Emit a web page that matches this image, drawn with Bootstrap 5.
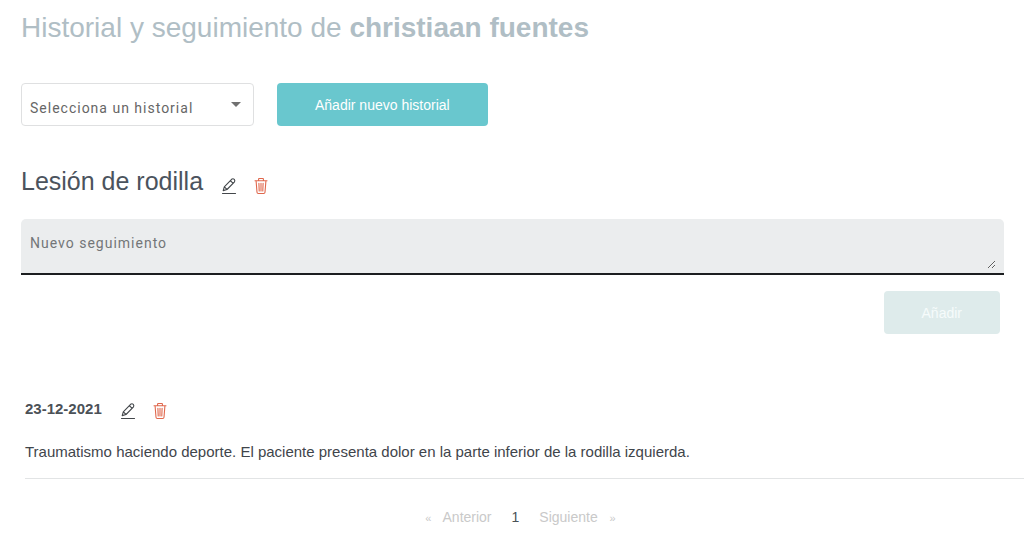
<!DOCTYPE html>
<html lang="es">
<head>
<meta charset="utf-8">
<meta name="viewport" content="width=device-width, initial-scale=1">
<title>Historial y seguimiento</title>
<link href="https://cdn.jsdelivr.net/npm/bootstrap@5.3.0/dist/css/bootstrap.min.css" rel="stylesheet">
<style>
body { font-family: "Liberation Sans", Arial, sans-serif; font-size: 15px; line-height: 20px; color: #3f454b; background: #fff; }
.page { padding: 9px 0 0 21px; }
.page-title { font-size: 28px; line-height: 38px; color: #b0bec5; font-weight: 400; }
.section-title { font-size: 25px; line-height: 36px; color: #4b535d; font-weight: 400; }
.toolbar { gap: 23px; margin-top: 36px; }
.history-select { width: 233px; height: 43px; padding: 8px 32px 0 8px; border: 1px solid #dfe0e1; border-radius: 4px; color: #666; font-family: Roboto, sans-serif; font-size: 14px; letter-spacing: 1px;
  background-image: url("data:image/svg+xml,%3Csvg xmlns='http://www.w3.org/2000/svg' viewBox='0 0 10 5'%3E%3Cpath d='M0 0h10L5 5z' fill='%23707070'/%3E%3C/svg%3E"); background-size: 10px 5px; background-position: right 12px top 18px; }
.btn-action { height: 43px; padding: 0 38px; border: 0; border-radius: 4px; font-size: 14px; line-height: 20px; color: #fff; background: #69c7ce; }
.btn-action:hover { background: #58b8c0; color: #fff; }
.btn-action:disabled { background: #deebeb; color: #f6fbfb; opacity: 1; }
.record { margin-top: 37px; }
.note-field { margin-right: 20px; padding: 14px 8px 4px 9px; background: #ebedee; border-bottom: 2px solid #1c1e20; border-radius: 5px 5px 0 0; }
.note-field textarea { height: 36px; padding: 0; border: 0; resize: vertical; background: transparent; font-family: Roboto, sans-serif; font-size: 14px; line-height: 20px; letter-spacing: 1px; overflow: hidden; }
.note-field textarea:focus { background: transparent; box-shadow: none; }
.note-field textarea::placeholder { color: #737678; }
.icon-btn { padding: 0; border: 0; line-height: 0; color: #43474b; }
.icon-btn.remove { color: #e0674c; }
.icon-btn svg { width: 16px; height: 18px; }
.actions { gap: 16px; margin-left: 18px; }
.entry { margin-left: 4px; border-bottom: 1px solid #e2e4e5; }
.entry-date { font-size: 15px; line-height: 20px; font-weight: 700; color: #4b5157; }
.entry-text { margin: 22px 0 0; }
.pager { gap: 21px; padding: 4px 4px 0 0; font-size: 14px; }
.pager .page-link { padding: 0; border: 0; background: transparent; color: #4b5157; font-size: 14px; line-height: 20px; }
.pager .disabled .page-link { color: #c9c9c9; background: transparent; }
.pager .arrow { font-size: 11px; }
</style>
</head>
<body>
<svg class="d-none" aria-hidden="true">
  <symbol id="pencil" viewBox="0 0 16 18"><g fill="none" stroke="currentColor" stroke-width="1.1" stroke-linejoin="round" stroke-linecap="round"><path d="M2.2 13.6 3.3 9.8 10.6 2.3Q12 1.2 13.3 2.4 14.4 3.7 13.3 5.1L6 12.5ZM9.4 3.6l2.7 2.7M3.4 9.9l2.5 2.5"/><path d="M1.5 16.5h13"/></g></symbol>
  <symbol id="trash" viewBox="0 0 16 18"><g fill="none" stroke="currentColor" stroke-width="1.1" stroke-linejoin="round" stroke-linecap="round"><path d="M2 3.7h12M5.6 3.5V2Q5.6 1.5 6.1 1.5h3.8Q10.4 1.5 10.4 2v1.5M3.1 4l.9 11.3Q4.1 16.5 5.3 16.5h5.4Q11.9 16.5 12 15.3L12.9 4M5.9 6.3l.3 7.7M8 6.3V14M10.1 6.3 9.8 14"/></g></symbol>
</svg>
<main class="page">
  <h1 class="page-title mb-0">Historial y seguimiento de <strong>christiaan fuentes</strong></h1>

  <div class="toolbar d-flex align-items-center">
    <select class="form-select history-select" aria-label="Historial">
      <option selected>Selecciona un historial</option>
      <option>Lesión de rodilla</option>
    </select>
    <button type="button" class="btn btn-action">Añadir nuevo historial</button>
  </div>

  <section class="record">
    <div class="d-flex align-items-end">
      <h2 class="section-title mb-0">Lesión de rodilla</h2>
      <div class="actions d-flex pb-1">
        <button type="button" class="btn icon-btn" aria-label="Editar historial"><svg><use href="#pencil"/></svg></button>
        <button type="button" class="btn icon-btn remove" aria-label="Eliminar historial"><svg><use href="#trash"/></svg></button>
      </div>
    </div>
    <form class="mt-3 pt-1">
      <div class="note-field d-flex">
        <textarea class="form-control" placeholder="Nuevo seguimiento" aria-label="Nuevo seguimiento"></textarea>
      </div>
      <div class="d-flex justify-content-end mt-3 me-4">
        <button type="submit" class="btn btn-action" disabled>Añadir</button>
      </div>
    </form>
  </section>

  <section class="mt-5 pt-3">
    <article class="entry pb-3">
      <div class="d-flex align-items-center">
        <h3 class="entry-date mb-0">23-12-2021</h3>
        <div class="actions d-flex pt-1">
          <button type="button" class="btn icon-btn" aria-label="Editar seguimiento"><svg><use href="#pencil"/></svg></button>
          <button type="button" class="btn icon-btn remove" aria-label="Eliminar seguimiento"><svg><use href="#trash"/></svg></button>
        </div>
      </div>
      <p class="entry-text">Traumatismo haciendo deporte. El paciente presenta dolor en la parte inferior de la rodilla izquierda.</p>
    </article>
    <nav class="mt-4" aria-label="Paginación">
      <ul class="pager pagination justify-content-center mb-0">
        <li class="page-item disabled"><a class="page-link" href="#"><span class="arrow me-2">«</span> Anterior</a></li>
        <li class="page-item"><a class="page-link" href="#">1</a></li>
        <li class="page-item disabled"><a class="page-link" href="#">Siguiente <span class="arrow ms-2">»</span></a></li>
      </ul>
    </nav>
  </section>
</main>
<script src="https://cdn.jsdelivr.net/npm/bootstrap@5.3.0/dist/js/bootstrap.bundle.min.js"></script>
</body>
</html>
